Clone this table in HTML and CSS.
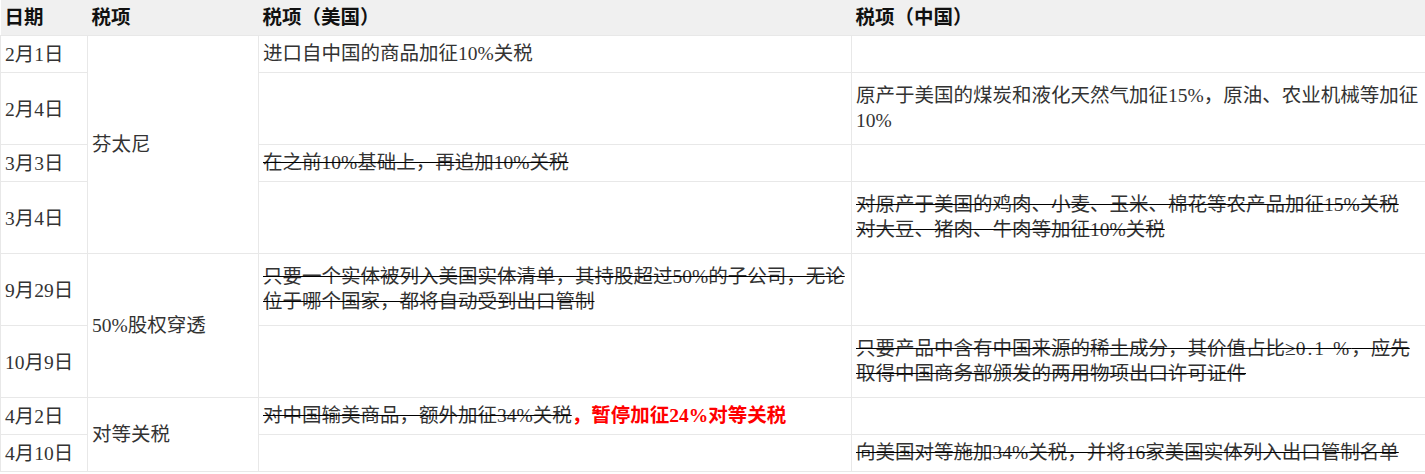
FILE: index.html
```html
<!DOCTYPE html>
<html lang="zh-CN">
<head>
    <meta charset="UTF-8">
    <meta name="viewport" content="width=device-width, initial-scale=1.0">
    <title>关税时间线</title>
    <link rel="stylesheet" href="styles.css">
</head>
<body>
    <table class="tariff-table">
        <colgroup>
            <col class="col-date">
            <col class="col-item">
            <col class="col-us">
            <col class="col-cn">
        </colgroup>
        <thead>
            <tr class="head-row">
                <th>日期</th>
                <th>税项</th>
                <th>税项（美国）</th>
                <th>税项（中国）</th>
            </tr>
        </thead>
        <tbody>
            <tr class="row-s">
                <td>2月1日</td>
                <td rowspan="4">芬太尼</td>
                <td>进口自中国的商品加征10%关税</td>
                <td></td>
            </tr>
            <tr class="row-d">
                <td>2月4日</td>
                <td></td>
                <td>原产于美国的煤炭和液化天然气加征15%，原油、农业机械等加征<br>10%</td>
            </tr>
            <tr class="row-s">
                <td>3月3日</td>
                <td><s>在之前10%基础上，再追加10%关税</s></td>
                <td></td>
            </tr>
            <tr class="row-d">
                <td>3月4日</td>
                <td></td>
                <td><s>对原产于美国的鸡肉、小麦、玉米、棉花等农产品加征15%关税<br>对大豆、猪肉、牛肉等加征10%关税</s></td>
            </tr>
            <tr class="row-d">
                <td>9月29日</td>
                <td rowspan="2">50%股权穿透</td>
                <td><s>只要一个实体被列入美国实体清单，其持股超过50%的子公司，无论<br>位于哪个国家，都将自动受到出口管制</s></td>
                <td></td>
            </tr>
            <tr class="row-d">
                <td>10月9日</td>
                <td></td>
                <td><s>只要产品中含有中国来源的稀土成分，其价值占比≥<span class="spaced">0.1 %</span>，应先<br>取得中国商务部颁发的两用物项出口许可证件</s></td>
            </tr>
            <tr class="row-s">
                <td>4月2日</td>
                <td rowspan="2">对等关税</td>
                <td><s>对中国输美商品，额外加征34%关税</s><span class="alert">，暂停加征24%对等关税</span></td>
                <td></td>
            </tr>
            <tr class="row-s">
                <td>4月10日</td>
                <td></td>
                <td><s>向美国对等施加34%关税，并将16家美国实体列入出口管制名单</s></td>
            </tr>
        </tbody>
    </table>
</body>
</html>
```

FILE: styles.css
```css
body {
    margin: 0;
    padding: 0;
    background-color: #fff;
    font-family: "Liberation Serif", "Noto Sans CJK SC", serif;
    font-size: 19.5px;
    color: #333;
}
.tariff-table {
    width: 1425px;
    border-collapse: collapse;
    table-layout: fixed;
}
.col-date {
    width: 87px;
}
.col-item {
    width: 171px;
}
.col-us {
    width: 593px;
}
.col-cn {
    width: 574px;
}
th, td {
    padding: 0 4px;
    line-height: 25px;
    text-align: left;
    vertical-align: middle;
    white-space: nowrap;
}
td {
    border: 1px solid #e8e8e8;
}
th {
    background-color: #f0f0f0;
    color: #111;
    font-weight: bold;
}
.head-row {
    height: 35px;
}
.row-s {
    height: 37px;
}
.row-d {
    height: 72px;
}
td:first-child {
    padding-top: 2px;
}
s {
    text-decoration-color: #000;
}
.spaced {
    letter-spacing: 2px;
}
.alert {
    color: #ff0000;
    font-weight: bold;
}
```
